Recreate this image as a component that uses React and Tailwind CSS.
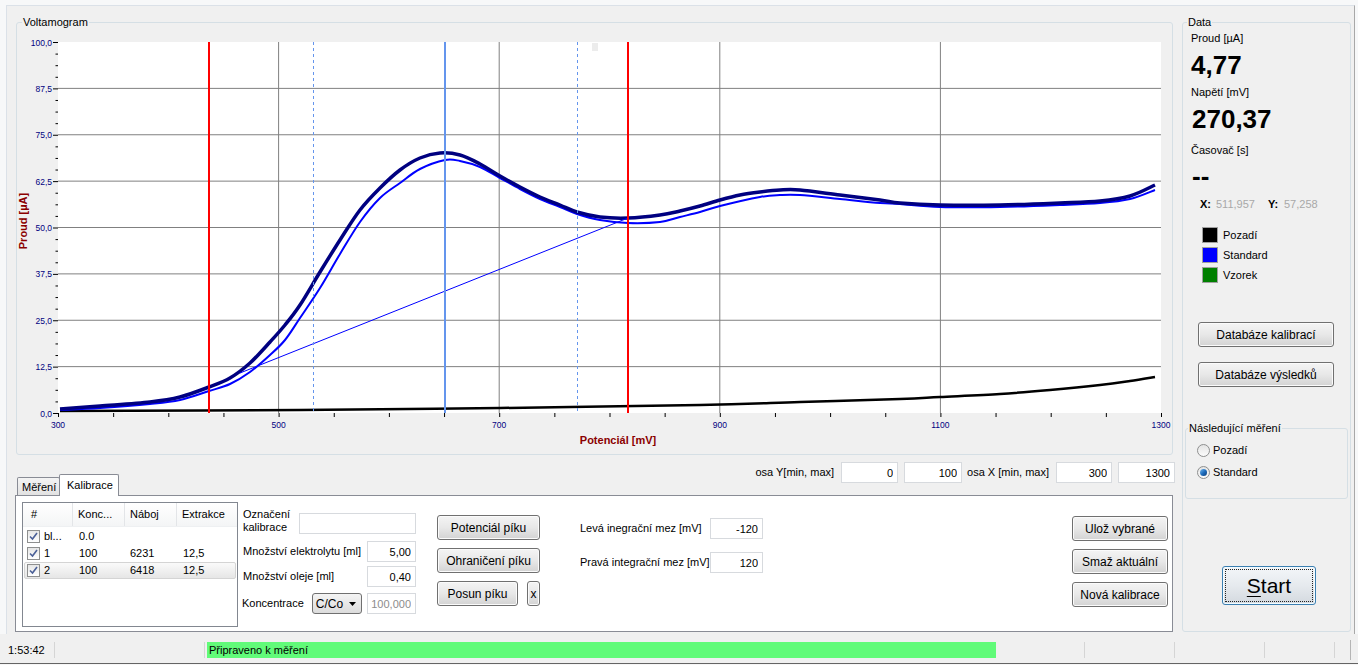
import React from "react";

// chart data in page pixel coordinates (svg viewBox matches the page)
const navy = [
  [60, 409], [100, 406], [150, 402], [180, 397], [209, 387], [230, 378], [250, 363], [270, 342],
  [285, 325], [300, 305], [320, 272], [340, 240], [360, 210], [380, 188], [400, 170], [420, 158],
  [440, 153], [460, 155], [480, 164], [500, 176], [520, 187], [540, 197], [560, 205], [577, 212],
  [600, 217], [628, 218], [660, 215], [680, 211], [700, 206], [720, 200], [740, 195], [760, 192],
  [780, 190], [800, 190], [840, 195], [880, 200], [900, 203], [940, 205], [1000, 205], [1060, 203],
  [1100, 201], [1130, 196], [1155, 185],
];
const blue = [
  [60, 410], [100, 408], [150, 404], [180, 400], [209, 391], [230, 384], [250, 372], [270, 355],
  [285, 340], [300, 318], [320, 288], [340, 254], [360, 222], [380, 198], [400, 183], [420, 169],
  [445, 160], [460, 161], [480, 167], [500, 178], [520, 189], [540, 199], [560, 207], [577, 214],
  [600, 220], [628, 223], [660, 222], [680, 217], [700, 212], [720, 206], [760, 197], [780, 195],
  [800, 195], [840, 199], [880, 203], [900, 204], [940, 207], [1000, 207], [1060, 205], [1100, 203],
  [1130, 199], [1155, 190],
];
const black = [
  [60, 411], [300, 410], [500, 408], [700, 405], [800, 402], [900, 399], [940, 397], [1000, 394],
  [1050, 390], [1100, 385], [1130, 381], [1155, 377],
];

const X = (v) => 58 + (v - 300) * 1.103;
const Y = (v) => 413 - v * 3.71;

// catmull-rom -> bezier
const smooth = (pts) => {
  let d = `M${pts[0][0]},${pts[0][1]}`;
  for (let i = 0; i < pts.length - 1; i++) {
    const p0 = pts[i - 1] || pts[i];
    const p1 = pts[i];
    const p2 = pts[i + 1];
    const p3 = pts[i + 2] || p2;
    const c1 = [p1[0] + (p2[0] - p0[0]) / 6, p1[1] + (p2[1] - p0[1]) / 6];
    const c2 = [p2[0] - (p3[0] - p1[0]) / 6, p2[1] - (p3[1] - p1[1]) / 6];
    d += ` C${c1[0]},${c1[1]} ${c2[0]},${c2[1]} ${p2[0]},${p2[1]}`;
  }
  return d;
};

const Chart = () => {
  const yVals = [];
  for (let v = 0; v <= 100; v += 12.5) yVals.push(v);
  const yMinor = [];
  for (let v = 0; v < 100; v += 3.125) if (v % 12.5 !== 0) yMinor.push(v);
  const xTicks = [];
  for (let v = 300; v <= 1300; v += 50) xTicks.push(v);

  return (
    <svg viewBox="17 23 1155 431" className="block w-[1155px] h-[431px]">
      <rect x="58" y="42" width="1103" height="371" fill="#ffffff" />
      {yVals.slice(1, -1).map((v) => (
        <line key={v} x1="58" x2="1161" y1={Y(v)} y2={Y(v)} stroke="#808080" strokeWidth="1" />
      ))}
      {[500, 700, 900, 1100].map((v) => (
        <line key={v} x1={X(v)} x2={X(v)} y1="42" y2="413" stroke="#808080" strokeWidth="1" />
      ))}
      <rect x="592" y="43" width="6" height="8" fill="#ececec" />

      <path d={smooth(black)} fill="none" stroke="#000000" strokeWidth="2.5" />
      <path d={smooth(blue)} fill="none" stroke="#0000ff" strokeWidth="2" />
      <path d={smooth(navy)} fill="none" stroke="#000080" strokeWidth="3.5" />
      <line x1="240" y1="373" x2="628" y2="218" stroke="#0000ff" strokeWidth="1" />

      <line x1="313.5" x2="313.5" y1="42" y2="413" stroke="#6495ed" strokeWidth="1" strokeDasharray="3 3" />
      <line x1="577.5" x2="577.5" y1="42" y2="413" stroke="#6495ed" strokeWidth="1" strokeDasharray="3 3" />
      <line x1="445" x2="445" y1="42" y2="413" stroke="#6495ed" strokeWidth="2" />
      <line x1="209" x2="209" y1="42" y2="413" stroke="#ff0000" strokeWidth="2" />
      <line x1="628" x2="628" y1="42" y2="413" stroke="#ff0000" strokeWidth="2" />

      {yVals.map((v) => (
        <g key={v}>
          <line x1="53" x2="58" y1={Y(v) + 0.5} y2={Y(v) + 0.5} stroke="#000" strokeWidth="1" />
          <text x="52" y={Y(v) + 3.5} textAnchor="end" fontSize="8.5" fill="#000080">
            {v.toFixed(1).replace(".", ",")}
          </text>
        </g>
      ))}
      {yMinor.map((v) => (
        <line key={v} x1="55.5" x2="58" y1={Y(v) + 0.5} y2={Y(v) + 0.5} stroke="#000" strokeWidth="1" />
      ))}
      {xTicks.map((v) => (
        <line key={v} x1={X(v) + 0.5} x2={X(v) + 0.5} y1="413" y2="417" stroke="#000" strokeWidth="1" />
      ))}
      {[300, 500, 700, 900, 1100, 1300].map((v) => (
        <text key={v} x={X(v)} y="428" textAnchor="middle" fontSize="8.5" fill="#000080">
          {v}
        </text>
      ))}
      <text x="618" y="444" textAnchor="middle" fontSize="11" fontWeight="bold" fill="#8b0000">
        Potenciál [mV]
      </text>
      <text
        x="27"
        y="221"
        textAnchor="middle"
        fontSize="11"
        fontWeight="bold"
        fill="#8b0000"
        transform="rotate(-90 27 221)"
      >
        Proud [µA]
      </text>
    </svg>
  );
};

const btn =
  "border border-[#707070] rounded-[3px] bg-linear-to-b from-[#f4f4f4] via-[#e8e8e8] to-[#d3d3d3] shadow-[inset_0_0_0_1px_#fbfbfb] text-[12px] text-black flex items-center justify-center";

const Field = ({ value, w, disabled }) => (
  <input
    readOnly
    value={value}
    className={`${w} h-[21px] border border-[#d7dade] bg-white text-right pr-[4px] text-[11px] outline-none ${
      disabled ? "text-[#8c8c8c]" : "text-black"
    }`}
  />
);

const Check = () => (
  <span className="w-[13px] h-[13px] border border-[#8e8f8f] bg-linear-to-b from-[#e6e6e6] to-[#ffffff] flex items-center justify-center">
    <svg width="9" height="9" viewBox="0 0 9 9">
      <path d="M1 4.5 L3.5 7 L8 1" fill="none" stroke="#4a5f97" strokeWidth="1.6" />
    </svg>
  </span>
);

const Radio = ({ checked, label }) => (
  <div className="flex items-center h-[18px]">
    <span className="w-[13px] h-[13px] rounded-full border border-[#8e8f8f] bg-linear-to-b from-[#e4e4e4] to-[#fbfbfb] flex items-center justify-center">
      {checked && (
        <span className="w-[7px] h-[7px] rounded-full bg-linear-to-br from-[#6fb7ee] via-[#1f6fbf] to-[#0b3d7a]" />
      )}
    </span>
    <span className="ml-[3px] text-[11px]">{label}</span>
  </div>
);

const Legend = ({ color, label }) => (
  <div className="flex items-center h-[20px]">
    <span className={`w-[16px] h-[16px] border border-[#a0a0a0] ${color}`} />
    <span className="ml-[5px] text-[11px]">{label}</span>
  </div>
);

const rows = [
  { id: "bl...", c: "0.0", n: "", e: "" },
  { id: "1", c: "100", n: "6231", e: "12,5" },
  { id: "2", c: "100", n: "6418", e: "12,5", sel: true },
];

const App = () => {
  return (
    <div className="w-[1358px] h-[665px] bg-[#f0f0f0] overflow-hidden font-['Liberation_Sans',Arial,sans-serif] text-black">
      <div className="h-[634px] pt-[5px] pl-[6px] pr-[3px] bg-[#f7f8f9]">
        <div className="h-full bg-[#f0f0f0] border-l border-t border-r border-[#dbe1e8] border-r-[#a8a8a8] flex">
          {/* left column */}
          <div className="ml-[9px] mt-[16px] w-[1159px] flex flex-col">
            <div className="relative w-[1157px] h-[433px] border border-[#d5dfe5] rounded-[3px]">
              <span className="absolute -top-[8px] left-[5px] px-[1px] bg-[#f0f0f0] text-[11px] leading-[14px]">
                Voltamogram
              </span>
              <Chart />
            </div>

            <div className="h-[40px] flex justify-between">
              <div className="flex items-end ml-[1px]">
                <div className="w-[43px] h-[18px] border border-b-0 border-[#898c95] rounded-t-[2px] bg-linear-to-b from-[#f4f4f4] to-[#e2e2e2] text-[11px] leading-[18px] pl-[4px]">
                  Měření
                </div>
                <div className="relative z-10 -ml-[1px] -mb-[1px] w-[60px] h-[22px] border border-b-0 border-[#898c95] rounded-t-[2px] bg-white text-[11px] leading-[21px] pl-[7px]">
                  Kalibrace
                </div>
              </div>
              <div className="flex items-center self-start mt-[7px] text-[11px]">
                <span>osa Y[min, max]</span>
                <div className="ml-[7px]"><Field value="0" w="w-[57px]" /></div>
                <div className="ml-[6px]"><Field value="100" w="w-[58px]" /></div>
                <span className="ml-[5px]">osa X [min, max]</span>
                <div className="ml-[7px]"><Field value="300" w="w-[56px]" /></div>
                <div className="ml-[6px]"><Field value="1300" w="w-[57px]" /></div>
              </div>
            </div>

            <div className="-ml-[1px] w-[1158px] h-[137px] border border-[#898c95] bg-white flex">
              {/* list view */}
              <div className="ml-[6px] mt-[6px] w-[216px] h-[125px] border border-[#828790] text-[11px]">
                <div className="h-[24px] flex bg-linear-to-b from-[#ffffff] to-[#f4f5f6] border-b border-[#eef0f2]">
                  <div className="w-[50px] pl-[8px] flex items-center border-r border-[#e3e5e8]">#</div>
                  <div className="w-[52px] pl-[5px] flex items-center border-r border-[#e3e5e8]">Konc...</div>
                  <div className="w-[52px] pl-[5px] flex items-center border-r border-[#e3e5e8]">Náboj</div>
                  <div className="flex-1 pl-[5px] flex items-center">Extrakce</div>
                </div>
                <div className="mt-[1px]">
                  {rows.map((r) => (
                    <div
                      key={r.id}
                      className={`mx-[1px] h-[17px] flex items-center ${
                        r.sel
                          ? "border border-[#d4d4d4] rounded-[2px] bg-linear-to-b from-[#fafafa] to-[#e6e6e6]"
                          : "border border-transparent"
                      }`}
                    >
                      <div className="w-[48px] pl-[2px] flex items-center">
                        <Check />
                        <span className="ml-[4px]">{r.id}</span>
                      </div>
                      <div className="w-[52px] pl-[6px]">{r.c}</div>
                      <div className="w-[52px] pl-[5px]">{r.n}</div>
                      <div className="flex-1 pl-[6px]">{r.e}</div>
                    </div>
                  ))}
                </div>
              </div>

              {/* form */}
              <div className="ml-[4px] mt-[11px] w-[174px] flex flex-col text-[11px]">
                <div className="h-[28px] flex justify-between">
                  <div className="pl-[1px] leading-[13px] self-center">
                    Označení
                    <br />
                    kalibrace
                  </div>
                  <div className="mt-[6px]"><Field value="" w="w-[117px]" /></div>
                </div>
                <div className="mt-[6px] h-[21px] flex items-center justify-between">
                  <span className="pl-[1px]">Množství elektrolytu [ml]</span>
                  <Field value="5,00" w="w-[49px]" />
                </div>
                <div className="mt-[4px] h-[21px] flex items-center justify-between">
                  <span className="pl-[1px]">Množství oleje [ml]</span>
                  <Field value="0,40" w="w-[49px]" />
                </div>
                <div className="mt-[6px] h-[21px] flex items-center">
                  <span>Koncentrace</span>
                  <div className="ml-[8px] w-[50px] h-[21px] border border-[#707070] rounded-[3px] bg-linear-to-b from-[#f4f4f4] to-[#dcdcdc] flex items-center justify-between pl-[3px] pr-[5px] text-[12px]">
                    <span>C/Co</span>
                    <svg width="7" height="4" viewBox="0 0 7 4">
                      <path d="M0 0 L7 0 L3.5 4 Z" fill="#000" />
                    </svg>
                  </div>
                  <div className="ml-auto"><Field value="100,000" w="w-[49px]" disabled /></div>
                </div>
              </div>

              {/* peak buttons */}
              <div className="ml-[21px] mt-[19px] flex flex-col gap-[8px]">
                <button className={`${btn} w-[103px] h-[25px]`}>Potenciál píku</button>
                <button className={`${btn} w-[103px] h-[25px]`}>Ohraničení píku</button>
                <div className="flex gap-[9px]">
                  <button className={`${btn} w-[81px] h-[25px]`}>Posun píku</button>
                  <button className={`${btn} w-[13px] h-[25px]`}>x</button>
                </div>
              </div>

              {/* integration limits */}
              <div className="ml-[40px] mt-[22px] flex flex-col gap-[13px] text-[11px]">
                <div className="flex items-center h-[21px]">
                  <span className="w-[130px]">Levá inegrační mez [mV]</span>
                  <Field value="-120" w="w-[53px]" />
                </div>
                <div className="flex items-center h-[21px]">
                  <span className="w-[130px]">Pravá integrační mez [mV]</span>
                  <Field value="120" w="w-[53px]" />
                </div>
              </div>

              {/* calibration buttons */}
              <div className="ml-auto mr-[4px] mt-[20px] flex flex-col gap-[8px]">
                <button className={`${btn} w-[96px] h-[25px]`}>Ulož vybrané</button>
                <button className={`${btn} w-[96px] h-[25px]`}>Smaž aktuální</button>
                <button className={`${btn} w-[96px] h-[25px]`}>Nová kalibrace</button>
              </div>
            </div>
          </div>

          {/* right column */}
          <div className="ml-[7px] mt-[16px] w-[169px] h-[610px] relative border border-[#d5dfe5] rounded-[3px] flex flex-col">
            <span className="absolute -top-[8px] left-[4px] px-[1px] bg-[#f0f0f0] text-[11px] leading-[14px]">Data</span>
            <div className="ml-[8px] mt-[8px] text-[11px] leading-[14px]">Proud [µA]</div>
            <div className="ml-[8px] mt-[5px] text-[26px] leading-[30px] font-bold">4,77</div>
            <div className="ml-[8px] mt-[5px] text-[11px] leading-[14px]">Napětí [mV]</div>
            <div className="ml-[9px] mt-[5px] text-[26px] leading-[30px] font-bold">270,37</div>
            <div className="ml-[8px] mt-[9px] text-[11px] leading-[14px]">Časovač [s]</div>
            <div className="ml-[9px] mt-[4px] text-[26px] leading-[30px] font-bold">--</div>
            <div className="ml-[17px] mt-[6px] flex text-[11px] leading-[14px]">
              <span className="w-[16px] font-bold">X:</span>
              <span className="w-[52px] text-[#a8a8a8]">511,957</span>
              <span className="w-[16px] font-bold">Y:</span>
              <span className="text-[#a8a8a8]">57,258</span>
            </div>
            <div className="ml-[19px] mt-[14px] flex flex-col">
              <Legend color="bg-[#000000]" label="Pozadí" />
              <Legend color="bg-[#0000ff]" label="Standard" />
              <Legend color="bg-[#008000]" label="Vzorek" />
            </div>
            <button className={`${btn} ml-[15px] mt-[37px] w-[136px] h-[25px]`}>Databáze kalibrací</button>
            <button className={`${btn} ml-[15px] mt-[15px] w-[136px] h-[25px]`}>Databáze výsledků</button>

            <div className="relative ml-[2px] mt-[41px] w-[163px] h-[71px] border border-[#d5dfe5] rounded-[3px] flex flex-col">
              <span className="absolute -top-[8px] left-[2px] px-[1px] bg-[#f0f0f0] text-[11px] leading-[14px]">
                Následující měření
              </span>
              <div className="ml-[11px] mt-[12px]">
                <Radio label="Pozadí" />
              </div>
              <div className="ml-[11px] mt-[4px]">
                <Radio checked label="Standard" />
              </div>
            </div>

            <button className="ml-[39px] mt-[67px] w-[94px] h-[39px] border border-[#3c7fb1] rounded-[3px] bg-linear-to-b from-[#f3f6f9] via-[#e6eaee] to-[#d3d9df] shadow-[inset_0_0_0_1px_#f2fbff] p-[2px]">
              <span className="w-full h-full border border-dotted border-[#222] flex items-center justify-center text-[21px]">
                <span className="underline underline-offset-[3px] decoration-1">S</span>tart
              </span>
            </button>
          </div>
        </div>
      </div>

      {/* status bar */}
      <div className="h-[29px] pt-[8px] flex items-start text-[11px]">
        <div className="w-[54px] h-[16px] pl-[8px] leading-[16px]">1:53:42</div>
        <div className="w-px h-[16px] bg-[#d5d5d5]" />
        <div className="w-[149px]" />
        <div className="w-px h-[16px] bg-[#d5d5d5]" />
        <div className="ml-[2px] w-[789px] h-[16px] bg-[#61fb79] leading-[16px] pl-[2px]">Připraveno k měření</div>
        <div className="w-[88px]" />
        <div className="w-px h-[16px] bg-[#d5d5d5]" />
        <div className="w-[89px]" />
        <div className="w-px h-[16px] bg-[#d5d5d5]" />
        <div className="w-[89px]" />
        <div className="w-px h-[16px] bg-[#d5d5d5]" />
        <div className="w-[69px]" />
        <div className="w-px h-[16px] bg-[#d5d5d5]" />
        <div className="w-[15px]" />
        <div className="w-px h-[20px] -mt-[2px] bg-[#b5b5b5]" />
      </div>
      <div className="h-px bg-[#646464]" />
      <div className="h-px bg-[#f7f7f7]" />
    </div>
  );
};

export default App;
